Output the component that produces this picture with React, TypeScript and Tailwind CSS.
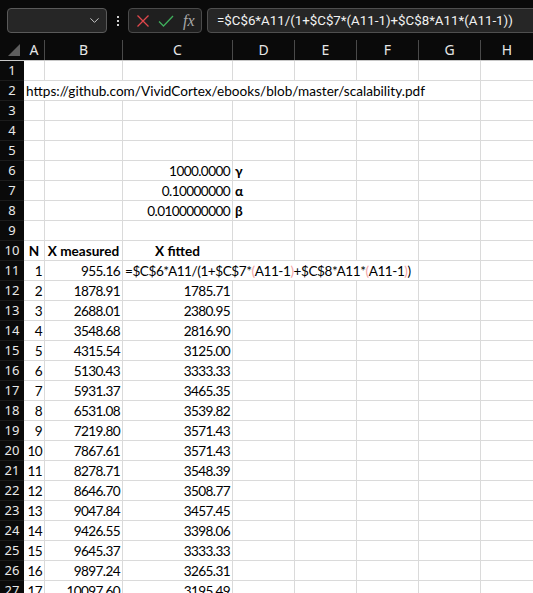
import React from "react";
import { ChevronDown } from "lucide-react";

type Seg = { w: string; text?: React.ReactNode; align?: "l" | "r" | "c"; bold?: boolean; last?: boolean; tight?: string };

const W = ["w-[21px]", "w-[78px]", "w-[110px]", "w-[62px]", "w-[62px]", "w-[62px]", "w-[62px]"];
const LETTERS = ["A", "B", "C", "D", "E", "F", "G", "H"];

const B = [
  "955.16", "1878.91", "2688.01", "3548.68", "4315.54", "5130.43", "5931.37", "6531.08", "7219.80",
  "7867.61", "8278.71", "8646.70", "9047.84", "9426.55", "9645.37", "9897.24", "10097.60",
];
const C = [
  "", "1785.71", "2380.95", "2816.90", "3125.00", "3333.33", "3465.35", "3539.82", "3571.43",
  "3571.43", "3548.39", "3508.77", "3457.45", "3398.06", "3333.33", "3265.31", "3195.49",
];

const NUM = "tracking-[-0.6px]";

function plain(vals: Record<number, Omit<Seg, "w">>): Seg[] {
  const segs: Seg[] = W.map((w, i) => ({ w, ...(vals[i] || {}) }));
  segs.push({ w: "flex-1", last: true, ...(vals[7] || {}) });
  return segs;
}

const P = ({ c }: { c: string }) => <span className="text-[#f4a3a3]">{c}</span>;

function rowSegs(r: number): Seg[] {
  if (r === 2)
    return [
      { w: "w-[457px]", text: "https://github.com/VividCortex/ebooks/blob/master/scalability.pdf", align: "l" },
      { w: "flex-1", last: true },
    ];
  if (r === 6) return plain({ 2: { text: "1000.0000", align: "r", tight: NUM }, 3: { text: "γ", align: "l", bold: true } });
  if (r === 7) return plain({ 2: { text: "0.10000000", align: "r", tight: NUM }, 3: { text: "α", align: "l", bold: true } });
  if (r === 8) return plain({ 2: { text: "0.0100000000", align: "r", tight: NUM }, 3: { text: "β", align: "l", bold: true } });
  if (r === 10)
    return plain({
      0: { text: "N", align: "c", bold: true },
      1: { text: "X measured", align: "c", bold: true },
      2: { text: "X fitted", align: "c", bold: true },
    });
  if (r === 11)
    return [
      { w: W[0], text: "1", align: "r", tight: NUM },
      { w: W[1], text: B[0], align: "r", tight: NUM },
      {
        w: "w-[296px]",
        align: "l",
        tight: "tracking-[-0.45px]",
        text: (
          <>
            =$C$6*A11/(1+$C$7*<P c="(" />A11-1<P c=")" />+$C$8*A11*<P c="(" />A11-1<P c=")" />)
          </>
        ),
      },
      { w: W[6] },
      { w: "flex-1", last: true },
    ];
  if (r >= 12) {
    const i = r - 11;
    return plain({
      0: { text: String(i + 1), align: "r", tight: NUM },
      1: { text: B[i], align: "r", tight: NUM },
      2: { text: C[i], align: "r", tight: NUM },
    });
  }
  return plain({});
}

function Row({ r }: { r: number }) {
  const segs = rowSegs(r);
  return (
    <div className="flex h-[20px] bg-white">
      <div className="w-[24px] shrink-0 bg-[#0a0a0a] border-b border-[#1c1c1c] flex items-center justify-center text-[13px] text-[#e8e8e8] font-['Noto_Sans',sans-serif] leading-none">
        {r}
      </div>
      {segs.map((s, i) => (
        <div
          key={i}
          className={`${s.w} shrink-0 h-[20px] border-b border-[#dadada] ${s.last ? "" : "border-r"} overflow-visible whitespace-nowrap px-[2px] text-[13.6px] leading-[20px] text-black font-['Lato',sans-serif] ${
            s.align === "r" ? "text-right" : s.align === "c" ? "text-center" : "text-left"
          } ${s.bold ? "font-bold" : ""} ${s.tight || ""}`}
        >
          {s.text}
        </div>
      ))}
    </div>
  );
}

export default function App() {
  const rows = Array.from({ length: 27 }, (_, i) => i + 1);
  return (
    <div className="w-[533px] h-[593px] overflow-hidden bg-[#0a0a0a] select-none">
      {/* Formula bar */}
      <div className="h-[40px] flex items-start pt-[8px] pl-[7px] overflow-hidden">
        <div className="w-[100px] shrink-0 h-[25px] rounded-[4px] border border-[#5a5a5a] bg-[#262626] flex items-center justify-end pr-[4px]">
          <ChevronDown size={15} strokeWidth={1.6} className="text-[#c9c9c9]" />
        </div>
        <div className="w-[21px] shrink-0 h-[25px] flex flex-col items-center justify-center gap-[2px]">
          <div className="w-[2px] h-[2px] bg-[#cfcfcf]" />
          <div className="w-[2px] h-[2px] bg-[#cfcfcf]" />
          <div className="w-[2px] h-[2px] bg-[#cfcfcf]" />
        </div>
        <div className="w-[74px] shrink-0 h-[25px] rounded-[4px] border border-[#4a4a4a] bg-[#1f1f1f] flex items-center pl-[7px]">
          <svg width="14" height="14" viewBox="0 0 14 14" className="mr-[8px]">
            <path d="M1.5 1.5 L12.5 12.5 M12.5 1.5 L1.5 12.5" stroke="#e0474c" strokeWidth="1.3" fill="none" />
          </svg>
          <svg width="16" height="14" viewBox="0 0 16 14" className="mr-[9px]">
            <path d="M1 7.5 L5.5 12 L15 2" stroke="#3fae5c" strokeWidth="1.3" fill="none" />
          </svg>
          <span className="text-[16px] italic text-[#a8a8a8] font-['Liberation_Serif',serif] leading-none">fx</span>
        </div>
        <div className="ml-[5px] w-[360px] shrink-0 h-[25px] rounded-[4px] border border-[#4f4f4f] bg-[#262626] flex items-center pl-[9px] text-[13.3px] text-[#f2f2f2] font-['Roboto',sans-serif] whitespace-nowrap">
          =$C$6*A11/(1+$C$7*(A11-1)+$C$8*A11*(A11-1))
        </div>
      </div>
      {/* Column headers */}
      <div className="flex h-[21px] border-b border-[#c8c8c8] bg-[#0a0a0a]">
        <div className="w-[24px] shrink-0 relative">
          <svg width="24" height="20" viewBox="0 0 24 20" className="absolute left-0 top-0">
            <polygon points="8,16 20,4 20,16" fill="#5e5e5e" />
          </svg>
        </div>
        {LETTERS.map((l, i) => (
          <div
            key={l}
            className={`${i < 7 ? W[i] + " border-r border-[#4a4a4a]" : "flex-1"} shrink-0 flex items-center justify-center text-[14px] text-[#e6e6e6] font-['Noto_Sans',sans-serif] leading-none`}
          >
            {l}
          </div>
        ))}
      </div>
      {rows.map((r) => (
        <Row key={r} r={r} />
      ))}
    </div>
  );
}
